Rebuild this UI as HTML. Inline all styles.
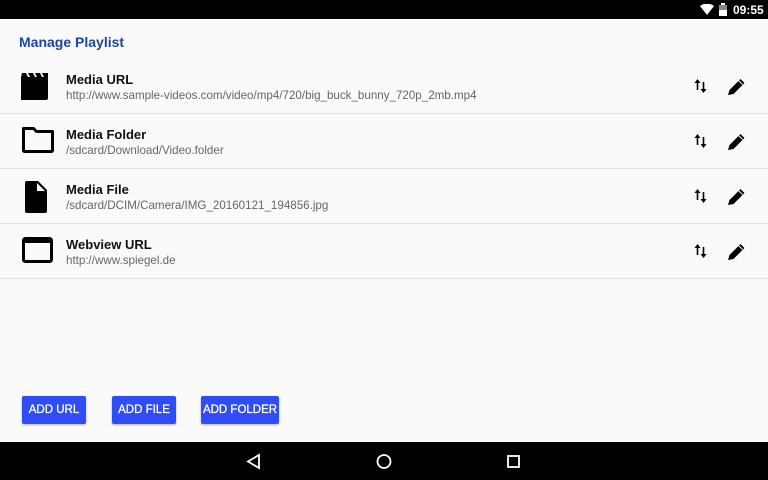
<!DOCTYPE html>
<html><head><meta charset="utf-8"><style>
*{margin:0;padding:0;box-sizing:border-box}
body{width:768px;height:480px;background:#fafafa;font-family:"Liberation Sans",sans-serif;position:relative;overflow:hidden}
.sb{position:absolute;top:0;left:0;width:768px;height:19px;background:#000;color:#fff;font-size:12px}
.nb{position:absolute;top:442px;left:0;width:768px;height:38px;background:#000}
h1{position:absolute;left:19px;top:34px;font-size:14px;color:#1a46a0;font-weight:bold}
.row{position:absolute;left:0;width:768px;height:55px;border-bottom:1px solid #e0e0e0}
.t{position:absolute;left:66px;top:13px;font-size:13px;font-weight:bold;color:#111}
.s{position:absolute;left:66px;top:30px;font-size:11.6px;color:#666}
.ic{position:absolute;left:21px;top:11px}
.btn{position:absolute;top:396px;height:28px;background:#2f4cf5;color:#fff;font-size:11.5px;text-align:center;line-height:28px;border-radius:2px;box-shadow:0 1px 2px rgba(0,0,0,.3);-webkit-text-stroke:0.3px #fff}
</style></head><body>
<div class="sb">
<svg style="position:absolute;left:700px;top:4px" width="14" height="11"><path d="M0 2 Q7 -3 14 2 L7 11Z" fill="#fff"/></svg>
<svg style="position:absolute;left:719px;top:3px" width="8" height="13"><rect x="2" y="0" width="4" height="2" fill="#fff"/><rect x="0" y="2" width="8" height="11" fill="#888"/><rect x="0" y="7" width="8" height="6" fill="#fff"/></svg>
<span style="position:absolute;left:733px;top:3px;font-weight:bold">09:55</span>
</div>
<h1>Manage Playlist</h1>
<div class="row" style="top:59px">
<svg class="ic" width="34" height="30" viewBox="0 0 34 30"><path d="M1 3 h4 l2 4 h2 l-2-4 h5 l2 4 h2 l-2-4 h5 l2 4 h2 l-2-4 h6 v25 a2 2 0 0 1-2 2 h-28 a2 2 0 0 1-2-2z" fill="#000"/></svg>
<div class="t">Media URL</div><div class="s">http://www.sample-videos.com/video/mp4/720/big_buck_bunny_720p_2mb.mp4</div>
</div>
<div class="row" style="top:114px">
<svg class="ic" width="34" height="30" viewBox="0 0 34 30"><path d="M2.5 3.5 h10 l3 3 h16 v19 a1 1 0 0 1-1 1 h-27 a1 1 0 0 1-1-1z" fill="none" stroke="#000" stroke-width="3" stroke-linejoin="round"/></svg>
<div class="t">Media Folder</div><div class="s">/sdcard/Download/Video.folder</div>
</div>
<div class="row" style="top:169px">
<svg class="ic" width="34" height="34" viewBox="0 0 34 34"><path d="M6 1 h11 l9 9 v21 a2 2 0 0 1-2 2 h-18 a2 2 0 0 1-2-2 v-28 a2 2 0 0 1 2-2z" fill="#000"/><path d="M16 3 v8 h8z" fill="#fff"/></svg>
<div class="t">Media File</div><div class="s">/sdcard/DCIM/Camera/IMG_20160121_194856.jpg</div>
</div>
<div class="row" style="top:224px">
<svg class="ic" width="34" height="30" viewBox="0 0 34 30"><rect x="2.5" y="3.5" width="28" height="23" rx="2" fill="none" stroke="#000" stroke-width="3"/><rect x="2" y="3" width="29" height="5" fill="#000"/></svg>
<div class="t">Webview URL</div><div class="s">http://www.spiegel.de</div>
</div>
<svg style="position:absolute;left:0;top:0" width="768" height="300">
<g id="ae">
<path d="M697.5 82 v8 M703.5 82 v8" stroke="#000" stroke-width="1.6"/>
<path d="M694.5 83 l3-4 3 4z M700.5 89 l3 4 3-4z" fill="#000"/>
<path d="M728 95 l1.5-5 11-11 4 4-11 11z" fill="#000"/><path d="M738.5 80.5 l4 4" stroke="#fafafa" stroke-width="1"/>
</g>
<use href="#ae" y="55"/><use href="#ae" y="110"/><use href="#ae" y="165"/>
</svg>
<div class="btn" style="left:22px;width:64px">ADD URL</div>
<div class="btn" style="left:112px;width:64px">ADD FILE</div>
<div class="btn" style="left:201px;width:78px">ADD FOLDER</div>
<div class="nb">
<svg style="position:absolute;left:246px;top:11px" width="290" height="17"><path d="M2 8.5 L13 2 V15Z" fill="none" stroke="#fff" stroke-width="1.8"/><circle cx="138" cy="8.5" r="6.5" fill="none" stroke="#fff" stroke-width="1.8"/><rect x="262" y="3" width="11" height="11" fill="none" stroke="#fff" stroke-width="1.8"/></svg>
</div>
</body></html>
